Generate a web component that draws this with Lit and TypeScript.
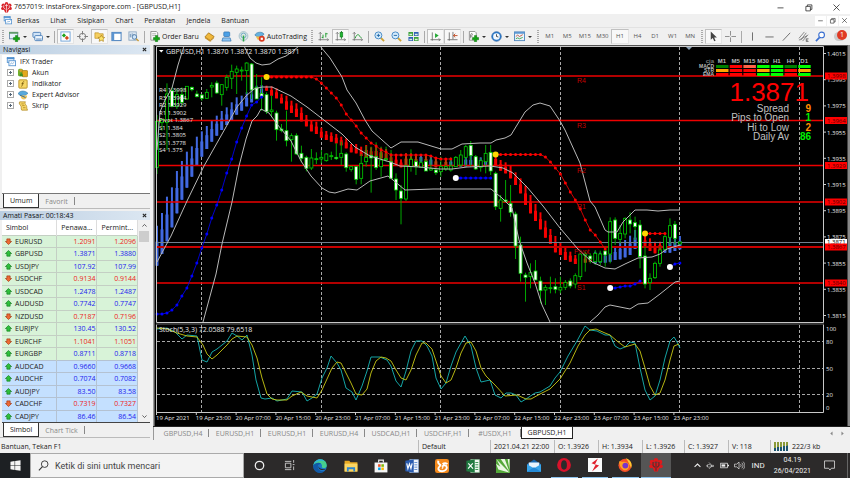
import { LitElement, html, svg, css } from "lit";
import { customElement } from "lit/decorators.js";
import { classMap } from "lit/directives/class-map.js";

/* ---------- icons, drawn on a 12 x 12 grid ---------- */
const plus = svg`<path d="M7 5h2.400v2.200h2.200v2.400H9.400v2.200H7V9.600H4.800V7.200H7z" fill="#14a514" stroke="#0a6e0a" stroke-width=".5"/>`;
const glyphs: Record<string, unknown> = {
  insta: svg`<g fill="#d8232a"><circle cx="6" cy="2" r="1.900"/><circle cx="2.500" cy="3.500" r="1.900"/><circle cx="9.500" cy="3.500" r="1.900"/><circle cx="1.900" cy="7" r="1.700"/><circle cx="10.100" cy="7" r="1.700"/><path d="M3 4h6v4L7.500 11.500h-3L3 8z"/></g><path d="M6 2v9M3 3.500v3l2 1.500M9 3.500v3L7 8" stroke="#fff" stroke-width=".7" fill="none"/>`,
  instaDark: svg`<g fill="#e0191c"><circle cx="6" cy="2" r="1.900"/><circle cx="2.500" cy="3.500" r="1.900"/><circle cx="9.500" cy="3.500" r="1.900"/><circle cx="1.900" cy="7" r="1.700"/><circle cx="10.100" cy="7" r="1.700"/><path d="M3 4h6v4L7.500 11.500h-3L3 8z"/></g><path d="M6 3v8M3.500 3.500v3l1.500 1.500M8.500 3.500v3L7 8" stroke="#4a3030" stroke-width=".9" fill="none"/>`,
  windows: svg`<rect x="1.500" y=".5" width="8" height="6" fill="#dcebfa" stroke="#4f8fce"/><path d="M1 1h9v1.500H1z" fill="#4f8fce"/><rect x="3.500" y="4.500" width="8" height="6" fill="#fff" stroke="#4f8fce"/><path d="M5 9l1.500-2 1.500 1 2-2" stroke="#7aa8d6" fill="none"/>`,
  newchart: svg`<rect x=".5" y="1.500" width="9" height="7" fill="#e6f1fa" stroke="#6a8cab"/><path d="M0 1h10v2H0z" fill="#5e9a6a"/>${plus}`,
  profiles: svg`<rect x="1" y="1.500" width="8.500" height="5.500" rx="1" fill="#cfe3f7" stroke="#4b7fb8"/><rect x="3" y="5" width="8.500" height="5.500" rx="1" fill="#eef6fd" stroke="#4b7fb8"/><path d="M4.500 8.800h6" stroke="#4b7fb8"/>`,
  market: svg`<rect x="1" y="1" width="10" height="10" fill="#fff" stroke="#6fa3d8"/><path d="M2 4.800l2.300-2.300 2.300 2.300-2.300 2.300z" fill="#1ea51e"/><path d="M5.200 7.500l2.300-2.300 2.300 2.300-2.300 2.300z" fill="#d34a1c"/>`,
  target: svg`<circle cx="6" cy="6" r="3.500" fill="none" stroke="#777"/><path d="M6 0v4M6 8v4M0 6h4M8 6h4" stroke="#777"/>`,
  folderstar: svg`<path d="M1 2h4l1 1h4v5H1z" fill="#f5cf60" stroke="#b98d1f" stroke-width=".7"/><path d="M8 4.500l1.200 2.200 2.500.4-1.800 1.700.4 2.500L8 10.200l-2.300 1.100.4-2.500L4.300 7.100l2.500-.4z" fill="#fbe46a" stroke="#a97c14" stroke-width=".7"/>`,
  panel: svg`<rect x="1" y="1.500" width="10" height="9" fill="#fff" stroke="#3f78b8"/><path d="M1 1.500h10v1.500H1zM1 3h2.500v7.500H1z" fill="#5b94d0"/>`,
  tester: svg`<rect x="1" y="1" width="8" height="9" fill="#eef4fa" stroke="#8aa6c0"/><path d="M2.500 7V3M4.500 6V2.500M6.500 7V3" stroke="#5d87b0"/><circle cx="7" cy="6.500" r="2.500" fill="#cfe6fa" stroke="#5079a5"/><path d="M9 8.500l2.500 2.500" stroke="#c89b38" stroke-width="1.500"/>`,
  order: svg`<path d="M2 .5h6l1.500 1.500v8H2z" fill="#fafafa" stroke="#777" stroke-width=".8"/><path d="M3.500 3h4M3.500 5h4" stroke="#999" stroke-width=".8"/>${plus}`,
  book: svg`<path d="M1 6.500l4-4.500 6 4-4 4.500z" fill="#f0b83c" stroke="#9c6b0c" stroke-width=".8"/><path d="M1 6.500v1.500l6 4v-1.500zM11 6v1.500l-4 4.500" fill="#c98d20"/>`,
  vps: svg`<rect x="3" y="1" width="6.500" height="5" rx="1" fill="#4ba0e6" stroke="#2469a9" stroke-width=".7"/><path d="M1 11l1-3.500h8l1 3.500z" fill="#8fc5f2" stroke="#2469a9" stroke-width=".7"/>`,
  signal: svg`<circle cx="6" cy="5.500" r="4.800" fill="#dfe9e2" stroke="#9fbccb"/><circle cx="6" cy="5" r="2.700" fill="none" stroke="#6aa6c4"/><path d="M5.200 5h1.600v6.500H5.200z" fill="#2da84a"/>`,
  auto: svg`<path d="M1 4.500C2 1 9 0 11 3.500L8 6H3z" fill="#66b2e0" stroke="#2d6f9d" stroke-width=".6"/><path d="M2 6h7l-2 3.500H4z" fill="#f0c04a"/><circle cx="8.500" cy="8.500" r="3.300" fill="#d93a20"/><path d="M7.300 7.300h2.400v2.400H7.300z" fill="#fff"/>`,
  bars: svg`<path d="M2.500 1.500v9M.5 9.500h11M1 3l1.500-1.500L4 3M10 8l1.500 1.500L10 11" stroke="#666" stroke-width=".8" fill="none"/><path d="M5.500 8V4M8.500 7V2M8.500 3h2M4 7h1.500" stroke="#1d9a2d"/>`,
  candles: svg`<path d="M2.500 1.500v9M.5 9.500h11M1 3l1.500-1.500L4 3M10 8l1.500 1.500L10 11" stroke="#666" stroke-width=".8" fill="none"/><path d="M7 0v8.500" stroke="#117a1d"/><rect x="5.500" y="1.500" width="3" height="5" fill="#22b533" stroke="#117a1d" stroke-width=".6"/>`,
  line: svg`<path d="M2.500 1.500v9M.5 9.500h11M1 3l1.500-1.500L4 3M10 8l1.500 1.500L10 11" stroke="#666" stroke-width=".8" fill="none"/><path d="M3.500 8c1-4 3.500-5 4.500-3s1.500 2 2.500 2.500" stroke="#1d9a2d" fill="none"/>`,
  zoomin: svg`<path d="M7 7l4 4" stroke="#cfa233" stroke-width="2"/><circle cx="4.800" cy="4.800" r="3.800" fill="#d5ebfb" stroke="#3f86c4"/><path d="M3 4.800h3.600M4.800 3v3.600" stroke="#2167a8"/>`,
  zoomout: svg`<path d="M7 7l4 4" stroke="#cfa233" stroke-width="2"/><circle cx="4.800" cy="4.800" r="3.800" fill="#d5ebfb" stroke="#3f86c4"/><path d="M3 4.800h3.600" stroke="#2167a8"/>`,
  tile: svg`<path d="M.5 1h5v4.500h-5zM6.500 6.500h5V11h-5z" fill="#3ba03b"/><path d="M6.500 1h5v4.500h-5zM.5 6.500h5V11h-5z" fill="#2f62b5"/><path d="M1.500 3h3v1.500h-3zM7.500 3h3v1.500h-3zM1.500 8.500h3V10h-3zM7.500 8.500h3V10h-3z" fill="#dff0df"/>`,
  scroll: svg`<path d="M2.500 1.500v9M.5 9.500h11M9.500 8l1.500 1.500L9.500 11" stroke="#666" stroke-width=".9" fill="none"/><path d="M5.500 2.500L9.500 5l-4 2.500z" fill="#22a833"/>`,
  shift: svg`<path d="M2.500 1.500v9M.5 9.500h11M6.500 1v8" stroke="#666" stroke-width=".9" fill="none"/><path d="M7 5h4.500M9 3L7 5l2 2" stroke="#c04a22" fill="none"/>`,
  indicator: svg`<path d="M1.500 .5h6L9 2v8H1.500z" fill="#fff" stroke="#777" stroke-width=".8"/><path d="M3 8V4c0-1.500 2-1.500 2 0M2.500 5.500H5" stroke="#555" stroke-width=".8" fill="none"/>${plus}`,
  clock: svg`<circle cx="6" cy="6" r="5.200" fill="#2f7fd0" stroke="#1b559a" stroke-width=".7"/><circle cx="6" cy="6" r="3.600" fill="#f2f8fe"/><path d="M6 3.500V6l2 .5" stroke="#333" stroke-width=".9" fill="none"/>`,
  template: svg`<rect x=".5" y="1" width="11" height="9.500" fill="#eaf3fb" stroke="#4f86bd"/><path d="M.5 1h11v2H.5z" fill="#5c97d2"/><path d="M2 6l2-1.500 2 1.500 3.500-2" stroke="#c0452b" stroke-width=".9" fill="none"/><path d="M2 8.500l2-1 2 1L9.500 7" stroke="#2d9a3a" stroke-width=".9" fill="none"/>`,
  cursor: svg`<path d="M3 .5v9l2.200-2 1.600 3.700 1.500-.7-1.600-3.500h3z" fill="#444"/>`,
  cross: svg`<path d="M6 0v5M6 7v5M0 6h5M7 6h5" stroke="#888"/>`,
  vline: svg`<path d="M6 1.500v9" stroke="#666"/>`,
  hline: svg`<path d="M1.500 6.500h9" stroke="#666"/>`,
  trend: svg`<path d="M2 10.500L10 2" stroke="#666"/>`,
  fork: svg`<path d="M1 8l6-7M3 10l6-8M5 11l6-7M1 10l9-5" stroke="#666" stroke-width=".8"/><path d="M9 8.500h2.500M9 10h2M9 11.500h2.500M9 8.500v3" stroke="#444" stroke-width=".7"/>`,
  search: svg`<path d="M5 7L1 11" stroke="#3a6fd0" stroke-width="1.800"/><circle cx="7.200" cy="4.300" r="3.100" fill="#fff" stroke="#3a6fd0" stroke-width="1.200"/>`,
  account: svg`<rect x="0" y="1" width="6" height="9" rx="2" fill="#6fae2d"/><circle cx="3.500" cy="3" r="1.800" fill="#d8a02a"/><rect x="5" y="3" width="6.500" height="7.500" rx="1" fill="#e3a81d" stroke="#94690b" stroke-width=".7"/><path d="M2 10c0-5 4-5 4 0z" fill="#3f8d23"/>`,
  fx: svg`<rect x="1" y="1" width="10" height="10" rx="1" fill="#f6d765" stroke="#b28b1e"/><path d="M7.500 3.500c-2-.8-2 1-2.200 2.500S5 9 4 8.800M4.200 5.600h2.800" stroke="#6e5208" stroke-width=".9" fill="none"/>`,
  expert: svg`<path d="M0 4.500C2 .5 8 0 12 4L8.500 6.500H3z" fill="#58a9dc" stroke="#2d6f9d" stroke-width=".6"/><path d="M3 6.500h8c0 3-2 5-4 5s-4-2-4-5z" fill="#efc55c"/><path d="M2 6l7 3" stroke="#2d6f9d" stroke-width="1.200"/>`,
  script: svg`<path d="M2 1h7c-1.500 1.500 0 3 1 4.500s0 3 1.500 5.500H4.500C3 9 4.500 7.500 3.500 6S.5 3 2 1z" fill="#f5d669" stroke="#a97f17" stroke-width=".8"/><path d="M4 3.500h3M5 5.500h3M6 8h3" stroke="#a97f17" stroke-width=".8"/>`,
  up: svg`<path d="M6 .8l5.300 5.200H8.800v4.500H3.200V6H.7z" fill="#2fc03c" stroke="#14801f" stroke-width="1.200"/>`,
  down: svg`<path d="M6 11.200L.7 6h2.500V1.500h5.600V6h2.500z" fill="#ee6a35" stroke="#a5360f" stroke-width="1.200"/>`,
  minimize: svg`<path d="M2 6.500h8" stroke="#222"/>`,
  restore: svg`<path d="M2.500 4.500h6v6h-6zM4.500 4.500v-2h6v6h-2" stroke="#222" fill="none"/>`,
  close: svg`<path d="M2 2l8 8M10 2l-8 8" stroke="#222" fill="none"/>`,
  boldclose: svg`<path d="M2 2l8 8M10 2l-8 8" stroke="#222" stroke-width="2.500" fill="none"/>`,
  chevup: svg`<path d="M1 8.500l5-5 5 5" stroke="currentColor" stroke-width="1.800" fill="none"/>`,
  chevdown: svg`<path d="M1 3.500l5 5 5-5" stroke="currentColor" stroke-width="1.800" fill="none"/>`,
  triLeft: svg`<path d="M8.500 1v10L3 6z" fill="#888"/>`,
  triRight: svg`<path d="M3.500 1v10L9 6z" fill="#888"/>`,
  win: svg`<path d="M.5 1.800L5 1.200V5.700H.5zM5.600 1.100L11.500.3v5.400H5.600zM.5 6.300H5v4.500l-4.500-.6zM5.600 6.300h5.900v5.400l-5.900-.8z" fill="#f4f4f4"/>`,
  lens: svg`<circle cx="7.300" cy="4.500" r="3.600" fill="none" stroke="#333"/><path d="M4.800 7.200L1 11.200" stroke="#333" stroke-width="1.200"/>`,
  cortana: svg`<circle cx="6" cy="6" r="4.600" fill="none" stroke="#eee" stroke-width="1.400"/>`,
  taskview: svg`<path d="M1 1.500h7M1 10.500h7M1.500 3.500h6v5h-6zM10.500 0v3M10.500 7v4M9.500 5h2" stroke="#ddd" stroke-width=".9" fill="none"/>`,
  edge: svg`<circle cx="6" cy="6" r="5.800" fill="#1b77c8"/><path d="M.4 5.400C1-.8 11.500-1.500 11.800 5.500c0 2.500-3.800 2.700-4.300 1.300C8.500 5 6.500 3 4 3.600 2 4 .8 5 .4 5.400z" fill="#45cf8e"/><path d="M.4 5.400C2-.5 8-.8 10 2 6 .5 2 2.500.4 5.400z" fill="#2fb5d8"/><path d="M.4 5.400C1.500 3 5.500 2.300 7 4.200 4 4 3.300 7 5 9s4.500 1.800 5.500.8C7 14-.5 11.500.4 5.400z" fill="#1159a6"/><path d="M5.200 5.200c-1 2 .8 4 5.500 3.400C9 10.500 3 9.500 5.200 5.200z" fill="#2b2b2b"/>`,
  explorer: svg`<path d="M.5 1.500h4l1 1.300h6v8H.5z" fill="#e8a922"/><path d="M.5 4h11v6.800H.5z" fill="#fbd664"/><path d="M2.500 7h7v3.800H8V8.800H4v2H2.500z" fill="#2d86cf"/>`,
  store: svg`<path d="M4 3V1h4v2" stroke="#eee" fill="none"/><path d="M.5 3h11v8.500H.5z" fill="#f5f5f5"/><path d="M3.500 4.500h2.200v2.200H3.500z" fill="#f05022"/><path d="M6.300 4.500h2.200v2.200H6.300z" fill="#7fba00"/><path d="M3.500 7.300h2.200v2.200H3.500z" fill="#00a4ef"/><path d="M6.300 7.300h2.200v2.200H6.300z" fill="#ffb900"/>`,
  word: svg`<path d="M4 .5h7.500v11H4z" fill="#f1f5fb" stroke="#8fb0dc" stroke-width=".6"/><path d="M8 3h2.500M8 5h2.500M8 7h2.500M8 9h2.500" stroke="#4a7fc9" stroke-width=".7"/><path d="M.3 1.500L7.500.5v11L.3 10.500z" fill="#2a5cb0"/><path d="M1.500 3.800l1 4.400 1.300-4 1.300 4 1-4.400" stroke="#fff" fill="none"/>`,
  uc: svg`<rect x="0" y="0" width="12" height="12" rx="2" fill="#f58a1c"/><path d="M3 1.500c-1 2 .5 3 1.500 3.500S2 7 3 9s5 2 6.500 0 0-4-2-3.500S7 8 6 7.500M6.500 4.500C8 3 10 3.500 10.500 4.500" stroke="#fff" stroke-width="1.600" fill="none"/>`,
  excel: svg`<path d="M4 .5h7.500v11H4z" fill="#f1faf3" stroke="#8cc49a" stroke-width=".6"/><path d="M8 3h2.500M8 5h2.500M8 7h2.500M8 9h2.500" stroke="#3c9a57" stroke-width=".9"/><path d="M.3 1.500L7.500.5v11L.3 10.500z" fill="#1f7a40"/><path d="M2 3.800l4 4.400M5.800 3.800l-4 4.400" stroke="#fff"/>`,
  corel: svg`<path d="M0 0h12v12H0z" fill="#54a83a"/><path d="M.5.500L11.500 11.500 5 9zM4 0l7.500 11L7.500 0zM10 0l1.500 9V0zM0 4l11 7.500L2 9z" fill="#e9f6e2"/>`,
  mail: svg`<path d="M0 4.500L6 .5l6 4V11H0z" fill="#1868b0"/><path d="M1.500 3h9V8h-9z" fill="#e8f4fd"/><path d="M0 4.500l6 3.500 6-3.500V11H0z" fill="#39a5ea"/><path d="M0 11l6-4 6 4z" fill="#2388d6"/>`,
  opera: svg`<circle cx="6" cy="6" r="5.900" fill="#d9122b"/><ellipse cx="6" cy="6" rx="2.500" ry="4" fill="#2b2b2b"/>`,
  flash: svg`<path d="M0 0h12v12H0z" fill="#fafafa"/><path d="M8.500.5L3 4.500l3.500 1.200L3.500 11.500 9.500 6.500 6 5.300z" fill="#e0202c"/>`,
  firefox: svg`<circle cx="6" cy="6.300" r="5.600" fill="#f5502a"/><path d="M6.500 0C11 1.500 12.500 5 11.300 8.500 10 6 9 3 6.500 0z" fill="#ffc82e"/><path d="M1 3c1-.5 2 0 2.500.5C5 3 8 3 9.500 6c.5 3-2 5-4 4.500S1 7 1 3z" fill="#ffa21f"/><circle cx="6.300" cy="6.500" r="2.500" fill="#7a35c9"/>`,
  usb: svg`<path d="M2 5h5v3H2zM7 5.800h3v1.500H7zM4 2l2 2M4 10.500l2-2M0 6.500h2" stroke="#ddd" stroke-width=".9" fill="#111"/>`,
  battery: svg`<path d="M.5 3h9.500v6H.5z" fill="none" stroke="#eee"/><path d="M2 4.500h5v3H2z" fill="#eee"/><path d="M10.500 5h1.500v2h-1.500z" fill="#eee"/>`,
  sound: svg`<path d="M.5 4.500H3l2.500-2.300v7.600L3 7.500H.5zM7 4.500c1 1 1 2 0 3M8.500 3c1.800 2 1.800 4 0 6M10 1.800c2.400 3 2.400 5.500 0 8.400" stroke="#ddd" stroke-width=".8" fill="none"/>`,
  note: svg`<path d="M.5 1h11v8H8L6.500 11 5 9H.5z" fill="none" stroke="#ddd" stroke-width=".9"/>`,
};
const icon = (name: string, size = "") =>
  html`<svg class="icon ${size}" viewBox="0 0 12 12" aria-hidden="true">${glyphs[name]}</svg>`;

/* ---------- chart data ---------- */
const STEP = 4.98;
const barX = (i: number) => 157 + STEP * i;

type Bar = [number, number, number];
type Candle = [number, number, number, number, number, number];
/* Levels are stored in thirds of a unit, counted from the top of each block. */
const block = <T extends number[]>(top: number, rows: T[]) =>
  rows.map((r) => r.map((v, k) => (k === 0 || k === 5 ? v : top + v / 3)) as T);

/* index, high, low, body top, body bottom, filled */
const candles: Candle[] = [
  ...block<Candle>(44, [
    [0,213,390,232,370,0],[1,225,260,227,236,0],[2,118,318,150,235,0],[3,130,190,140,187,1],[4,135,195,152,187,0],[5,130,185,152,175,1],
    [6,127,167,127,165,0],[7,128,142,130,137,1],[8,140,160,150,158,1],[9,150,170,153,163,1],[10,135,165,145,163,0],[11,115,160,124,129,0],
    [12,110,150,117,147,1],[13,120,185,122,152,0],[14,92,140,100,130,0],[15,62,135,82,103,0],[16,65,150,75,85,0],[17,68,110,78,81,0],
    [18,55,150,57,80,0],[19,57,165,60,138,1],[20,90,165,130,165,1],[21,100,200,148,158,1],[22,145,210,152,203,1],[23,155,220,198,203,0],
    [24,200,290,207,257,1],[25,240,265,255,260,1],[26,200,307,260,290,1],[27,268,353,275,287,0],[28,268,333,275,330,1],[29,305,355,328,343,1],
    [30,335,382,340,373,1],[31,315,378,342,372,0],[32,325,360,344,347,0],
  ]),
  ...block<Candle>(70, [
    [33,240,280,262,267,0],[34,250,275,252,272,0],[35,245,270,257,260,0],[36,220,270,262,266,1],[37,215,285,250,262,0],[38,247,305,252,293,1],
    [39,287,305,290,298,0],[40,288,343,290,328,1],[41,252,343,280,325,0],[42,228,290,262,275,0],[43,230,368,256,264,1],[44,217,300,260,293,1],
    [45,230,320,270,290,0],[46,230,275,266,269,0],[47,240,325,275,325,1],[48,310,390,327,360,1],[49,345,463,363,385,1],[50,285,393,287,387,0],
    [51,238,305,268,290,0],[52,270,315,275,290,1],[53,262,292,278,292,0],[54,270,303,275,303,1],[55,262,303,296,300,0],[56,297,315,300,308,1],
    [57,260,320,290,305,0],[58,285,303,290,297,0],[59,262,305,288,300,0],[60,258,290,262,290,0],[61,240,290,255,285,0],[62,225,290,230,262,0],
    [63,213,290,226,257,1],[64,255,300,260,297,1],[65,265,305,272,292,0],[66,225,310,250,275,0],[67,225,315,247,303,1],
  ]),
  ...block<Candle>(130, [
    [68,125,240,130,230,1],[69,195,275,210,235,0],[70,150,215,210,215,1],[71,165,260,220,247,1],[72,245,387,252,348,1],[73,320,455,345,430,1],
    [74,428,515,435,442,1],[75,400,475,428,440,0],[76,390,450,423,450,1],[77,440,520,453,482,1],[78,465,525,472,480,0],[79,440,490,473,476,0],
    [80,445,490,470,478,1],[81,440,490,472,480,0],[82,450,480,457,472,0],[83,445,475,453,468,1],[84,430,475,437,462,0],[85,370,450,372,440,0],
    [86,365,425,372,376,0],[87,370,400,378,387,1],[88,360,405,370,395,0],[89,362,405,372,395,0],[90,350,410,363,375,1],[91,262,400,275,372,0],
    [92,262,345,270,325,1],[93,285,340,310,328,0],[94,262,325,265,312,0],[95,247,310,270,282,1],[96,260,330,278,290,1],[97,270,415,285,380,1],
    [98,350,475,378,462,1],[99,430,480,445,458,0],[100,395,447,400,443,0],[101,350,410,360,400,0],[102,315,362,320,358,0],[103,265,345,287,322,0],
    [104,273,345,283,325,1],[105,333,345,336,342,0],
  ]),
];

const blueBars: Bar[] = [
  ...block<Bar>(44, [
    [0,545,665],[1,507,630],[2,458,592],[3,430,550],[4,381,508],[5,351,467],[6,323,431],[7,307,398],[8,278,363],[9,262,338],[10,246,315],
    [11,230,293],[12,215,275],[13,201,258],[14,190,243],[15,175,228],[16,160,212],[17,155,200],[18,145,187],[19,135,175],[20,125,165],[21,123,150],
  ]),
  ...block<Bar>(70, [[53,252,275],[55,258,285],[59,265,290],[60,262,285],[61,255,290],[62,255,290],[63,258,288],[65,262,285],[66,250,285]]),
  ...block<Bar>(130, [
    [88,365,400],[89,368,398],[90,365,398],[91,360,395],[92,350,390],[93,335,388],[94,330,382],[95,317,375],[96,300,357],[102,355,368],
    [103,320,368],[104,323,363],[105,318,358],
  ]),
];
const redBars: Bar[] = [
  ...block<Bar>(44, [[22,125,140],[23,127,155],[24,133,163],[25,150,178],[26,155,197],[27,170,207],[28,178,219],[29,190,232],[30,213,247],[31,228,262],[32,233,270]]),
  ...block<Bar>(70, [
    [33,173,203],[34,183,210],[35,187,215],[36,192,220],[37,200,226],[38,205,235],[39,222,247],[40,222,250],[41,230,258],[42,225,262],
    [43,232,262],[44,230,262],[45,233,265],[46,237,270],[47,250,280],[48,258,285],[49,268,292],
  ]),
  ...block<Bar>(130, [
    [68,75,105],[69,90,122],[70,97,130],[71,107,145],[72,127,165],[73,145,190],[74,167,225],[75,195,250],[76,222,273],[77,247,298],
    [78,272,323],[79,297,342],[80,318,367],[81,337,375],[82,350,390],[83,365,395],[84,375,402],[98,318,350],[99,325,363],[100,335,370],[101,335,360],
  ]),
];
const orangeBars: Bar[] = [
  ...block<Bar>(70, [[42,240,262],[45,240,265],[50,250,290],[51,250,290],[52,255,285],[54,255,285],[56,262,292],[58,265,292]]),
  ...block<Bar>(130, [[86,378,398],[87,380,396]]),
];

interface Trail { start: number; head?: string; color: string; ys: number[] }
const trails: Trail[] = [
  { start: 0, color: "blue", ys: [314,314,313,310,305,296,288,276,263,248,234,218,205,190,173,159,142,128,116,105,102,97] },
  { start: 22, head: "gold", color: "red", ys: [77,77,77,77,77,77,77,77,77,77,79,83,88,93,98,105,114,120,126,133,138,143,146,150,152,155,155,155,155,155,155,155,155,156,158,159,159,159] },
  { start: 60, head: "white", color: "blue", ys: [178,178,178,178,178,178,178,178] },
  { start: 68, head: "gold", color: "red", ys: [154.5,154.5,154.5,154.5,154.5,154.5,154.5,154.5,154.5,154.5,157,162,168,174,183,192,200,209,220,230,235,242,249] },
  { start: 91, head: "white", color: "blue", ys: [288,288,287,286,286,284,281] },
  { start: 98, head: "gold", color: "red", ys: [233.5,233.5,233.5,233.5,233.5] },
  { start: 103, head: "white", color: "blue", ys: [267,264,263] },
];

const bands = [
  "157,150 160,112 165,100 172,88 178,65 184,46",
  "244,46 250,58 256,63 262,65 270,64 278,59 286,56 293,51 299,46",
  "320,46 330,58 342,77 347,90 356,103 365,120 372,131 391,148 401,142 418,142 441,149 452,149 462,144 480,143 491,143 496,140 505,138 511,135 514,130 525,112 533,105 540,103 550,106 560,121 565,130 580,163 590,201 595,207 605,230 608,232 617,232 623,222 635,210 647,210 658,211 670,210 680,210",
  "157,262 171,236 187,201 204,166 226,127 237,107 246,96 254,89 262,87 272,87 291,96 307,107 320,117 342,134 355,147 370,156 390,162 400,166 420,167 440,169 452,169 467,167 490,166 497,167 503,168 513,173 527,187 543,206 560,228 577,248 592,262 605,268 615,269 625,264 638,258 652,257 660,254 667,249 680,245",
  "203,322 216,274 222,244 232,202 239,166 246,139 252,121 257,116 261,109 269,113 277,124 291,141 301,161 311,176 322,188 329,192 335,193 348,189 357,190 370,181 388,176 393,180 405,190 433,189 491,189 497,194 502,198 512,208 519,240 527,263 535,283 542,305 550,322",
  "590,322 598,315 605,307 610,305 630,309 638,304 648,303 660,294 665,290 675,282 680,281",
];

const stochMain =
  "157,329 167,328 175,332 182,339 187,335 197,336 202,360 207,362 212,352 217,349 222,345 227,341 232,333 237,336 242,340 247,335 252,355 256,380 261,398 265,399 272,398 277,401 287,399 292,391 302,392 307,401 312,398 317,394 322,378 327,368 331,356 337,363 341,370 346,388 352,392 356,400 362,386 367,371 371,357 380,357 387,360 391,366 396,381 401,387 406,371 411,351 416,341 422,341 427,346 432,356 436,378 441,389 446,383 451,366 456,352 461,343 465,336 471,346 476,368 481,382 490,380 495,395 501,398 506,393 511,393 516,395 521,402 526,399 535,393 540,392 550,386 555,378 560,372 568,356 577,341 585,326 590,330 597,331 605,335 610,335 615,346 620,349 625,347 630,342 635,343 640,368 645,390 650,400 655,396 660,380 665,358 670,341 674,337 677,342 680,348";
const stochSignal =
  "157,328 167,329 177,333 187,336 197,337 203,345 207,354 212,359 217,355 222,350 227,345 232,339 237,336 247,337 252,345 257,358 262,378 267,394 272,399 277,400 287,400 292,396 301,392 307,396 312,397 317,398 322,390 327,379 332,368 337,362 341,363 346,373 351,383 356,394 362,395 367,389 371,373 376,361 381,357 386,358 391,361 396,370 401,378 406,380 411,370 416,355 422,343 426,343 432,349 436,361 441,376 446,383 451,380 456,368 461,353 466,343 471,342 476,351 481,368 486,376 491,381 495,385 505,396 517,395 526,399 531,399 540,394 550,389 560,379 570,363 578,346 585,335 590,330 596,329 605,333 610,335 617,341 625,347 635,344 640,351 645,368 650,386 655,395 660,393 665,380 670,360 674,346 679,344";

const levels = [
  { y: 76, name: "R4", price: "1.3998" },
  { y: 120.5, name: "R3", price: "1.3964" },
  { y: 165.5, name: "R2", price: "1.3929" },
  { y: 202, name: "R1", price: "1.3902" },
  { y: 247, name: "Pivot", price: "1.3867" },
  { y: 283, name: "S1", price: "1.3840" },
];
const sideLevels = ["R4 1.3998", "R3 1.3964", "R2 1.3929", "R1 1.3902", "Pivot 1.3867", "S1 1.384", "S2 1.3805", "S3 1.3778", "S4 1.375"];
const axis = ["1.4015", "1.3995", "1.3975", "1.3955", "1.3935", "1.3915", "1.3895", "1.3875", "1.3855", "1.3835", "1.3815"];
const times = ["19 Apr 2021", "19 Apr 23:00", "20 Apr 07:00", "20 Apr 15:00", "20 Apr 23:00", "21 Apr 07:00", "21 Apr 15:00", "21 Apr 23:00", "22 Apr 07:00", "22 Apr 15:00", "22 Apr 23:00", "23 Apr 07:00", "23 Apr 15:00", "23 Apr 23:00"];
const frames = ["M1", "M5", "M15", "M30", "H1", "H4", "D1"];
const strength = [
  { name: "MACD", cells: ["green", "red", "tomato", "lime", "lime", "green", "lime"] },
  { name: "STR", cells: ["orange", "red", "red", "orange", "lime", "red", "orange"] },
  { name: "EMA", cells: ["red", "red", "red", "lime", "lime", "red", "lime"] },
];
const stats: [string, string, string][] = [
  ["Spread", "9", "warn"],
  ["Pips to Open", "1", "good"],
  ["Hi to Low", "2", "warn"],
  ["Daily Av", "86", "good"],
];

@customElement("price-chart")
class PriceChart extends LitElement {
  static styles = css`
    :host { display: block; background: #000; }
    svg { display: block; width: 100%; height: auto; }
    text { font: 6px "Open Sans", sans-serif; fill: #e8e8e8; }
    .cap { font-size: 7px; }
    .lvl { font: 7px "Liberation Sans", sans-serif; fill: #c40000; }
    .end { text-anchor: end; }
    .mid { text-anchor: middle; }
    .tf { font: bold 6px "Liberation Sans", sans-serif; fill: #bbb; }
    .tag { font: bold 5px "Liberation Sans", sans-serif; fill: #bbb; }
    .dim { fill: #777; }
    .big { font: 26px "Liberation Sans", sans-serif; fill: #f00; }
    .stat { font: 10px "Liberation Sans", sans-serif; fill: #c0c0c0; }
    .val { font: bold 10px "Liberation Sans", sans-serif; }
    .warn { fill: #ff8c00; }
    .good { fill: #00f000; }
    .onred { fill: #500; }
    .onwhite { fill: #000; }
    .frame { fill: none; stroke: #c8c8c8; }
    .grid { stroke: #a8a8a8; stroke-dasharray: 3 2; }
    .band { fill: none; stroke: #b8b8b8; stroke-width: 1; }
  `;
  render() {
    const histo = (rows: Bar[], color: string) =>
      rows.map(([i, a, b]) => svg`<path d="M${barX(i)} ${a}V${b}" stroke=${color} stroke-width="2"/><path d="M${barX(i)} ${a + (b - a) * 0.4}V${b}" stroke=${color} stroke-width="3"/>`);
    return html`<svg viewBox="154 45 696 381" role="img" aria-label="GBPUSD,H1">
      <rect x="847.500" y="45" width="3" height="381" fill="#888"/>
      <path d="M154.500 426V45.500H848" stroke="#555" fill="none"/>
      ${[201.5, 321.5, 440.5, 560.5, 679.5, 799.5].map((x) => svg`<path class="grid" d="M${x} 47V322M${x} 325V412"/>`)}
      ${[341.5, 368.5, 394.5].map((y) => svg`<path class="grid" d="M157 ${y}H823"/>`)}
      ${histo(blueBars, "#4169e1")} ${histo(redBars, "#f50000")} ${histo(orangeBars, "#b5440c")}
      <path d="M157 242.500H823" stroke="#708090"/>
      ${levels.map((l) => svg`<path d="M157 ${l.y}H823" stroke=${l.name === "Pivot" ? "#c80000" : "#ee0000"} stroke-width=${l.name === "Pivot" ? 2 : 1.4}/>`)}
      ${candles.map(([i, hi, lo, t, b, f]) => svg`<path d="M${barX(i)} ${hi}V${lo}" stroke="#00a800"/><rect x=${barX(i) - 1.5} y=${t} width="3" height=${Math.max(b - t, 1)} fill=${f ? "#fff" : "#000"} stroke="#00d000" stroke-width=".8"/>`)}
      ${bands.map((p) => svg`<polyline class="band" points=${p}/>`)}
      ${trails.map((t) => {
        const pts = t.ys.map((y, k) => [barX(t.start + k), y]);
        return svg`<polyline points=${pts.map((p) => p.join(",")).join(" ")} fill="none" stroke=${t.color} stroke-width=".8"/>
          ${pts.map(([x, y], k) => k === 0 && t.head
            ? svg`<circle cx=${x} cy=${y} r="3" fill=${t.head}/>`
            : svg`<circle cx=${x} cy=${y} r="1.500" fill=${t.color}/>`)}`;
      })}
      <path class="frame" d="M156.500 46.500H823.500V322.500H156.500z"/>
      <path class="frame" d="M156.500 324.500V412.500H823.500V324.500"/>
      <path d="M156 324H824" stroke="#666"/>
      <path d="M686 47h6l-3 3z" fill="#8aa0b4"/>
      <path d="M159 50h4.500l-2.250 2.500z" fill="#fff"/>
      <text class="cap" x="166" y="54">GBPUSD,H1 1.3870 1.3872 1.3870 1.3871</text>
      ${sideLevels.map((t, k) => svg`<text x="159" y=${92 + k * 7.5}>${t}</text>`)}
      ${levels.map((l) => svg`<text class="lvl" x=${l.name === "Pivot" ? 574 : 577} y=${l.y + 7}>${l.name}</text>`)}
      <text class="tf dim end" x="714" y="63">cja</text>
      ${frames.map((f, k) => svg`<text class="tf mid" x=${722 + k * 13.7} y="63">${f}</text>`)}
      ${strength.map((r, j) => svg`<text class="tag end" x="714" y=${68 + j * 4}>${r.name}</text>
        ${r.cells.map((c, k) => svg`<rect x=${716 + k * 13.7} y=${65 + j * 4} width="12.500" height="3" fill=${c}/>`)}`)}
      <text class="big end" x="809" y="101">1.3871</text>
      ${stats.map(([n, v, c], k) => svg`<text class="stat end" x="789" y=${112 + k * 9.3}>${n}</text><text class="val end ${c}" x="811" y=${112 + k * 9.3}>${v}</text>`)}
      ${axis.map((t, k) => svg`<path d="M823 ${53.5 + k * 26.2}h3" stroke="#ccc"/><text x="827" y=${56 + k * 26.2}>${t}</text>`)}
      <rect x="825" y="239" width="22" height="7" fill="#fff"/><text class="onwhite" x="827" y="244">1.3871</text>
      ${levels.map((l) => svg`<rect x="825" y=${l.y - 3.5} width="22" height="7" fill="#f00"/><text class="onred" x="827" y=${l.y + 2}>${l.price}</text>`)}
      <polyline points=${stochMain} fill="none" stroke="#16b5b5" stroke-width=".9"/>
      <polyline points=${stochSignal} fill="none" stroke="#c8c814" stroke-width=".9"/>
      <text class="cap" x="159" y="332">Stoch(5,3,3) 72.0588 79.6518</text>
      ${[["100", 331], ["80", 344], ["50", 371], ["20", 397], ["0", 410]].map(([t, y]) => svg`<text x="826" y=${y}>${t}</text>`)}
      ${times.map((t, k) => svg`<path d="M${156.5 + k * 39.8} 412v3" stroke="#ccc"/><text x=${156 + k * 39.8} y="420">${t}</text>`)}
    </svg>`;
  }
}

/* ---------- application shell ---------- */
const quotes: [string, string, string, boolean][] = [
  ["EURUSD", "1.2091", "1.2096", false], ["GBPUSD", "1.3871", "1.3880", true], ["USDJPY", "107.92", "107.99", true],
  ["USDCHF", "0.9134", "0.9144", false], ["USDCAD", "1.2478", "1.2487", true], ["AUDUSD", "0.7742", "0.7747", true],
  ["NZDUSD", "0.7187", "0.7196", false], ["EURJPY", "130.45", "130.52", true], ["EURCHF", "1.1041", "1.1051", false],
  ["EURGBP", "0.8711", "0.8718", true], ["AUDCAD", "0.9660", "0.9668", true], ["AUDCHF", "0.7074", "0.7082", true],
  ["AUDJPY", "83.50", "83.58", true], ["CADCHF", "0.7319", "0.7327", false], ["CADJPY", "86.46", "86.54", true],
];
const tree: [string, string][] = [["account", "Akun"], ["fx", "Indikator"], ["expert", "Expert Advisor"], ["script", "Skrip"]];
const menus = ["Berkas", "Lihat", "Sisipkan", "Chart", "Peralatan", "Jendela", "Bantuan"];
const chartTabs = ["GBPUSD,H4", "EURUSD,H1", "EURUSD,H1", "EURUSD,H4", "USDCAD,H1", "USDCHF,H1", "#USDX,H1", "GBPUSD,H1"];
const periods = ["M1", "M5", "M15", "M30", "H1", "H4", "D1", "W1", "MN"];
const apps = ["cortana", "taskview", "edge", "explorer", "store", "word", "uc", "excel", "corel", "mail", "opera", "flash", "firefox", "instaDark"];

@customElement("app-root")
class AppRoot extends LitElement {
  static styles = css`
    :host { display: flex; flex-direction: column; min-height: 100vh; background: #f0f0f0; color: #222; font: 7px/11px "Open Sans", "Noto Sans", sans-serif; overflow: hidden; }
    * { box-sizing: border-box; }
    button, input { font: inherit; color: inherit; border: 0; background: none; padding: 0; margin: 0; }
    button { display: flex; align-items: center; justify-content: center; white-space: nowrap; }
    .icon { width: 11px; height: 11px; flex: none; }
    .icon.s { width: 7px; height: 7px; }
    .icon.xs { width: 5px; height: 5px; }
    .icon.l { width: 14px; height: 14px; }
    .icon.m { width: 9px; height: 9px; }
    .title { height: 14px; background: #fff; display: flex; align-items: center; gap: 2px; padding-left: 1px; }
    .title h1 { font: inherit; line-height: 14px; margin: 0; flex: 1; }
    .title nav { display: flex; }
    .title button { width: 28px; height: 14px; }
    .menu { height: 13px; display: flex; align-items: center; padding-left: 3px; gap: 11px; }
    .menu .lead { margin-right: -6px; }
    .mdi { margin-left: auto; display: flex; gap: 1px; }
    .mdi button { width: 11px; height: 10px; background: #fff; }
    .tools { height: 18px; display: flex; align-items: center; border-top: 1px solid #e2e2e2; }
    .tools button { width: 17px; height: 15px; flex: none; }
    .tools button.drop { width: 23px; gap: 3px; }
    .tools button.text { width: auto; gap: 2px; padding: 0 2px; }
    .tools button.on { background: #f8f8f8; border: 1px solid #c0c0c0; border-right-color: #e4e4e4; border-bottom-color: #e4e4e4; }
    .drop::after { content: ""; border: 2px solid transparent; border-top-color: #333; border-bottom: 0; }
    .sep { width: 1px; height: 12px; margin: 0 2px; background: #aaa; flex: none; }
    .grip { width: 2px; height: 13px; margin: 0 2px; flex: none; background: repeating-linear-gradient(#aaa 0 1px, transparent 1px 2px); }
    .periods { width: 158px; display: grid; grid-template-columns: repeat(9, 1fr); color: #555; font-size: 6px; }
    .tools .periods button { width: auto; }
    .tools button.chat { position: relative; margin: 0 2px 0 auto; }
    .bubble { width: 11px; height: 9px; border-radius: 5px; background: #ccc; }
    .badge { position: absolute; right: 1px; top: 1px; width: 10px; height: 10px; border-radius: 5px; background: #e03a24; color: #fff; line-height: 10px; text-align: center; }
    .work { display: grid; grid-template-columns: 154px minmax(0, 1fr); }
    .side { display: flex; flex-direction: column; padding-right: 3px; border-right: 1px solid #999; }
    .head { height: 9px; display: flex; align-items: center; justify-content: space-between; padding: 0 3px; line-height: 9px; color: #111; background: linear-gradient(90deg, #bccfe2, #dce7f2); }
    .head h2 { font: inherit; margin: 0; }
    .tree { flex: 1; background: #fff; margin: 1px 0 0 2px; padding: 1px 0 0 4px; border-bottom: 1px solid #777; }
    .tree ul { list-style: none; margin: 0; padding: 0 0 0 1px; }
    .node { display: flex; align-items: center; height: 11px; gap: 4px; }
    .node .icon { width: 10px; height: 10px; }
    .plus { width: 7px; height: 7px; border: 1px solid #aaa; background: linear-gradient(#567, #567) center / 3px 1px no-repeat, linear-gradient(#567, #567) center / 1px 3px no-repeat, #fff; }
    .tabs { display: flex; height: 14px; padding-left: 3px; color: #888; }
    .tabs button { padding: 0 6px; }
    .tabs button.on { background: #fff; color: #222; border: 1px solid #333; border-top: 0; }
    .tabs i { width: 1px; height: 8px; align-self: center; background: #888; }
    .gap { height: 3px; border-top: 1px solid #bbb; }
    .market { display: flex; margin-left: 2px; background: #fff; border-bottom: 1px solid #444; }
    table { flex: 1; border-collapse: collapse; table-layout: fixed; }
    th { height: 15px; padding: 0 4px; font-weight: 400; text-align: left; border-right: 1px solid #ddd; }
    td { height: 12px; padding: 0 1px; line-height: 11px; text-align: right; border: 1px solid #c4cfc4; border-width: 1px 1px 0 0; background: #d8f3d8; }
    th:first-child { width: 60px; }
    tr:nth-child(even) td { height: 13px; }
    tr.sky td { background: #c4e0ff; border-color: #b4c2d2; }
    td:first-child { text-align: left; padding-left: 3px; }
    .sym { display: flex; align-items: center; gap: 3px; }
    .up { color: #2222ee; }
    .down { color: #ee2222; }
    .scroll { width: 12px; display: flex; flex-direction: column; align-items: center; justify-content: space-between; padding: 3px 0; background: #f0f0f0; color: #333; }
    .scroll b { width: 10px; height: 11px; margin: 3px 0 auto; background: #cdcdcd; }
    .charttabs { display: flex; height: 14px; padding-left: 4px; color: #888; border-top: 1px solid #222; margin-left: -1px; }
    .charttabs button { width: 52px; height: 12px; background: linear-gradient(#888, #888) right center / 1px 8px no-repeat; }
    .charttabs button.on { background: #fff; color: #222; border: 1px solid #222; border-top: 0; }
    .charttabs span { margin: 0 5px 0 auto; display: flex; gap: 6px; align-items: center; }
    .status { height: 13px; display: grid; grid-template-columns: 1fr 72px 64px 44px 44px 42px 44px 42px 80px; line-height: 13px; padding-left: 1px; }
    .status div { padding-left: 3px; border-left: 1px solid #bbb; display: flex; align-items: center; gap: 3px; white-space: nowrap; }
    .status div:first-child { border: 0; padding: 0; }
    .net { width: 15px; height: 9px; background: linear-gradient(170deg, #8a9a3a 50%, transparent 51%), #1b5570; mask: repeating-linear-gradient(90deg, #000 0 2px, transparent 2px 3px); }
    .task { flex: 1; min-height: 25px; display: flex; align-items: stretch; background: #2c2a2a; color: #eee; }
    .start { width: 30px; background: #1d2023; }
    .find { width: 214px; background: #f3f3f3; color: #444; display: flex; align-items: center; gap: 6px; padding-left: 7px; border: 1px solid #aaa; }
    .find input { flex: 1; min-width: 0; font: 9px Roboto, sans-serif; }
    .find input::placeholder { color: #444; opacity: 1; }
    .apps { width: 427px; display: grid; grid-template-columns: repeat(14, 1fr); }
    .apps .run { border-bottom: 1px solid #8fc4ee; margin: 0 2px; }
    .apps .on { background: #555; margin: 0; }
    .tray { margin-left: auto; display: flex; align-items: center; gap: 5px; padding-right: 2px; }
    .tray .lang { font: 8px Roboto, sans-serif; margin: 0 4px 0 2px; }
    .clock { font: 7px/11px Roboto, sans-serif; text-align: center; }
    .tray .note { padding: 0 12px 0 8px; border-right: 1px solid #666; height: 25px; }
  `;

  private tool(name: string, label: string, cls = "") {
    return html`<button class=${cls} aria-label=${label}>${icon(name)}</button>`;
  }

  render() {
    return html`
      <header class="title">${icon("insta")}<h1>7657019: InstaForex-Singapore.com - [GBPUSD,H1]</h1>
        <nav><button aria-label="Minimize">${icon("minimize", "m")}</button><button aria-label="Restore">${icon("restore", "m")}</button><button aria-label="Close">${icon("close", "m")}</button></nav>
      </header>
      <nav class="menu">${icon("windows", "m lead")}${menus.map((m) => html`<button>${m}</button>`)}
        <span class="mdi"><button aria-label="Minimize chart">${icon("minimize", "s")}</button><button aria-label="Restore chart">${icon("restore", "s")}</button><button aria-label="Close chart">${icon("close", "s")}</button></span>
      </nav>
      <div class="tools">
        <i class="grip"></i>
        ${this.tool("newchart", "New chart", "drop")}${this.tool("profiles", "Profiles", "drop")}
        <i class="sep"></i>
        ${this.tool("market", "Market watch", "on")}${this.tool("target", "Data window")}${this.tool("folderstar", "Navigator", "on")}${this.tool("panel", "Terminal")}${this.tool("tester", "Strategy tester")}
        <i class="sep"></i>
        <button class="text">${icon("order")}Order Baru</button>
        ${this.tool("book", "MetaEditor")}${this.tool("vps", "Hosting")}${this.tool("signal", "Signals")}
        <button class="text">${icon("auto")}AutoTrading</button>
        <i class="grip"></i>
        ${this.tool("bars", "Bar chart")}${this.tool("candles", "Candlesticks", "on")}${this.tool("line", "Line chart")}
        <i class="sep"></i>
        ${this.tool("zoomin", "Zoom in")}${this.tool("zoomout", "Zoom out")}${this.tool("tile", "Tile windows")}
        <i class="sep"></i>
        ${this.tool("scroll", "Auto scroll", "on")}${this.tool("shift", "Chart shift", "on")}
        <i class="sep"></i>
        ${this.tool("indicator", "Indicators", "drop")}${this.tool("clock", "Periods", "drop")}${this.tool("template", "Templates", "drop")}
        <i class="grip"></i>
        <div class="periods">${periods.map((p) => html`<button class=${classMap({ on: p === "H1" })}>${p}</button>`)}</div>
        <i class="grip"></i>
        ${this.tool("cursor", "Cursor", "on")}${this.tool("cross", "Crosshair")}
        <i class="sep"></i>
        ${this.tool("vline", "Vertical line")}${this.tool("hline", "Horizontal line")}${this.tool("trend", "Trendline")}${this.tool("fork", "Channel")}${this.tool("search", "Search")}
        <button class="chat" aria-label="Chat"><i class="bubble"></i><span class="badge">1</span></button>
      </div>
      <main class="work">
        <aside class="side">
          <div class="head"><h2>Navigasi</h2><button aria-label="Close navigator">${icon("boldclose", "xs")}</button></div>
          <div class="tree">
            <div class="node">${icon("windows")}IFX Trader</div>
            <ul>${tree.map(([i, t]) => html`<li class="node"><i class="plus"></i>${icon(i)}${t}</li>`)}</ul>
          </div>
          <div class="tabs"><button class="on">Umum</button><button>Favorit</button><i></i></div>
          <div class="gap"></div>
          <div class="head"><h2>Amati Pasar: 00:18:43</h2><button aria-label="Close market watch">${icon("boldclose", "xs")}</button></div>
          <div class="market">
            <table>
              <thead><tr><th>Simbol</th><th>Penawa...</th><th>Permint...</th></tr></thead>
              <tbody>${quotes.map(([s, b, a, up], k) => html`<tr class=${classMap({ sky: k > 9 })}>
                <td><span class="sym">${icon(up ? "up" : "down", "s")}${s}</span></td>
                <td class=${up ? "up" : "down"}>${b}</td><td class=${up ? "up" : "down"}>${a}</td></tr>`)}</tbody>
            </table>
            <div class="scroll">${icon("chevup", "xs")}<b></b>${icon("chevdown", "xs")}</div>
          </div>
          <div class="tabs"><button class="on">Simbol</button><button>Chart Tick</button><i></i></div>
          <div class="gap"></div>
        </aside>
        <section>
          <price-chart></price-chart>
          <div class="charttabs">${chartTabs.map((t, k) => html`<button class=${classMap({ on: k === 7 })}>${t}</button>`)}
            <span>${icon("triLeft", "xs")}${icon("triRight", "xs")}</span></div>
        </section>
      </main>
      <div class="status"><div>Bantuan, Tekan F1</div><div>Default</div><div>2021.04.21 22:00</div><div>O: 1.3926</div><div>H: 1.3934</div><div>L: 1.3926</div><div>C: 1.3927</div><div>V: 118</div><div><i class="net"></i>222/3 kb</div></div>
      <footer class="task">
        <button class="start" aria-label="Start">${icon("win")}</button>
        <label class="find">${icon("lens")}<input type="text" placeholder="Ketik di sini untuk mencari" aria-label="Ketik di sini untuk mencari" /></label>
        <div class="apps">${apps.map((a, k) => html`<button aria-label=${a} class=${classMap({ run: k > 9, on: k === 13 })}>${icon(a, k > 1 ? "l" : "")}</button>`)}</div>
        <div class="tray">${icon("chevup", "s")}${icon("usb", "m")}${icon("battery", "m")}${icon("sound")}<span class="lang">IND</span>
          <time class="clock">04.19<br />26/04/2021</time><button class="note" aria-label="Notifications">${icon("note")}</button></div>
      </footer>
    `;
  }
}
